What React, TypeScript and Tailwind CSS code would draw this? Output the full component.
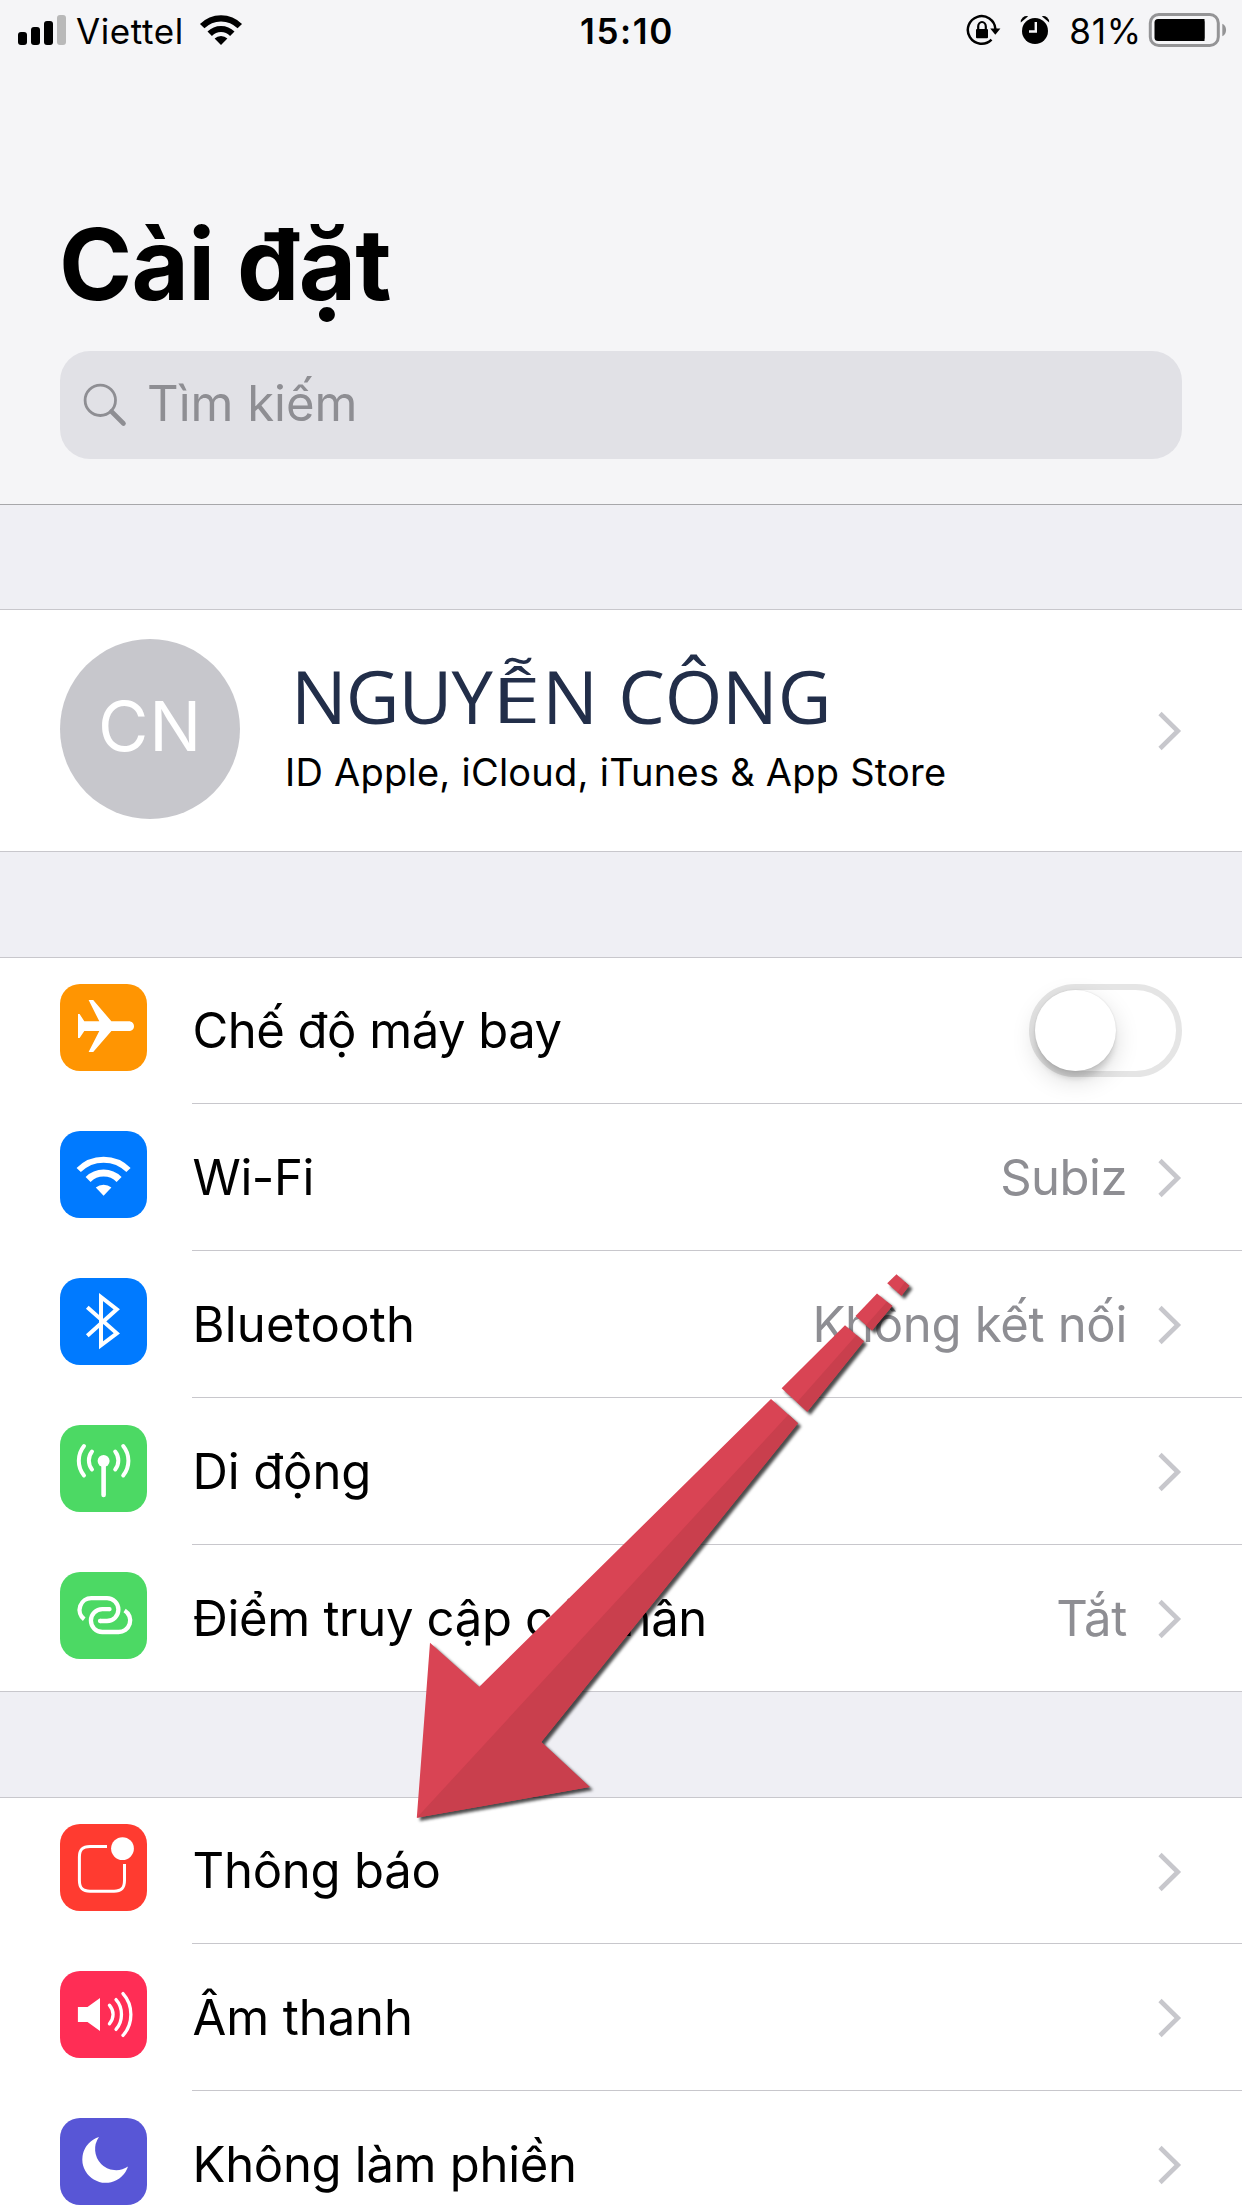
import React from "react";
import type { ReactNode } from "react";

function Chevron() {
  return (
    <svg className="mt-0.5 h-10 w-6 shrink-0" viewBox="0 0 24 40" fill="none">
      <path d="M2 2.5 19.8 20 2 37.5" stroke="#c7c7cc" strokeWidth="4.6" />
    </svg>
  );
}

function StatusBar() {
  return (
    <div className="grid h-[60px] grid-cols-3 items-center text-[35px] leading-[40px]">
      <div className="flex items-center pl-[18px]">
        <svg className="h-[30px] w-12 shrink-0" viewBox="0 0 48 30">
          <rect x="0" y="17" width="9" height="13" rx="3" />
          <rect x="13" y="12" width="9" height="18" rx="3" />
          <rect x="26" y="6" width="9" height="24" rx="3" />
          <rect x="39" y="0" width="9" height="30" rx="3" fill="#b9b9b9" />
        </svg>
        <span className="ml-[10px] pt-[2px] tracking-[0.6px]">Viettel</span>
        <svg className="ml-[15.5px] h-[30px] w-[44px] shrink-0" viewBox="0 0 44 30" fill="none">
          <path d="M3.2 11.2A26.3 26.3 0 0 1 40.8 11.2" stroke="#000" strokeWidth="6.2" />
          <path d="M10.7 18.7A15.9 15.9 0 0 1 33.3 18.7" stroke="#000" strokeWidth="6.2" />
          <path d="M22 30 15.6 23.6A9 9 0 0 1 28.4 23.6Z" fill="#000" />
        </svg>
      </div>
      <div className="pt-[2px] pl-3 text-center font-semibold tracking-[1.6px]">15:10</div>
      <div className="flex items-center justify-end pr-[14px]">
        <svg className="h-9 w-9 shrink-0" viewBox="0 0 36 36" fill="none">
          <path d="M30.4 17A13.8 13.8 0 1 0 26.5 27.6" stroke="#000" strokeWidth="2.5" />
          <path d="M25.2 16.4H35.4L30.3 22.8Z" fill="#000" />
          <rect x="11" y="17" width="12" height="9.3" rx="1" fill="#000" />
          <path d="M13.2 18V14.6A3.8 4.6 0 0 1 20.8 14.6V18" stroke="#000" strokeWidth="2.2" />
        </svg>
        <svg className="ml-[19px] h-8 w-8 shrink-0" viewBox="0 0 32 32" fill="none">
          <circle cx="15" cy="17" r="13" fill="#000" />
          <path d="M0.8 8.6A6 6 0 0 1 8.2 2.2Z" fill="#000" />
          <path d="M29.2 8.6A6 6 0 0 0 21.8 2.2Z" fill="#000" />
          <path d="M15.8 8V17.5H9" stroke="#f5f5f7" strokeWidth="2.4" />
        </svg>
        <span className="ml-[17px] pt-[2px] tracking-[0.8px]">81%</span>
        <svg className="ml-[6px] h-9 w-[80px] shrink-0" viewBox="0 0 80 36" fill="none">
          <rect x="2.3" y="2.5" width="68" height="31" rx="8.5" stroke="#949496" strokeWidth="3" />
          <rect x="6.5" y="7" width="50" height="22" rx="3.5" fill="#000" />
          <path d="M56.5 7V29H50V7Z" fill="#000" />
          <path d="M74.3 11.8C79.3 13.5 79.3 22.5 74.3 24.2Z" fill="#949496" />
        </svg>
      </div>
    </div>
  );
}

const glyphs: Record<string, ReactNode> = {
  plane: (
    <path
      fill="#fff"
      d="M18 30H19.6L24.3 37.3H39.3L28.6 16H33.2L51.4 37.3H68.6C72 37.3 74 39.5 74 42.2C74 45 72 47 68.6 47H51.4L33.2 68H28.6L39.3 47H24.3L19.6 54H18Z"
    />
  ),
  wifi: (
    <>
      <path d="M18.7 39A35.2 35.2 0 0 1 68.5 39" stroke="#fff" strokeWidth="6" />
      <path d="M28.1 48.5A21.8 21.8 0 0 1 59.1 48.5" stroke="#fff" strokeWidth="7" />
      <path d="M43.6 64.7 35.8 56.6A12 12 0 0 1 51.4 56.6Z" fill="#fff" />
    </>
  ),
  bluetooth: (
    <path d="M27.3 29.3 56.8 55.3 41 67.3V19L56.8 31.3 27.3 57.7" stroke="#fff" strokeWidth="4" strokeMiterlimit="10" />
  ),
  antenna: (
    <g stroke="#fff" strokeLinecap="round" strokeWidth="4">
      <circle cx="43.6" cy="36" r="6" fill="#fff" stroke="none" />
      <path d="M43.6 36V70" strokeWidth="4.6" />
      <path d="M32 26.5A14.5 14.5 0 0 0 32 44.5" />
      <path d="M55.2 26.5A14.5 14.5 0 0 1 55.2 44.5" />
      <path d="M24 21A23.5 23.5 0 0 0 24 50.5" />
      <path d="M63.2 21A23.5 23.5 0 0 1 63.2 50.5" />
    </g>
  ),
  hotspot: (
    <g stroke="#fff" strokeWidth="4.3">
      <path d="M24.2 47.2A11.7 11.7 0 0 1 31.5 26.2H47A11.4 11.4 0 0 1 47 49H40" />
      <path d="M49.5 37.2H42.3A11.4 11.4 0 0 0 42.3 60H58A11.6 11.6 0 0 0 64.6 38.5" />
      <path d="M40 49H40.2M49.3 37.2H49.5" strokeLinecap="round" />
    </g>
  ),
  notifications: (
    <>
      <path d="M47 22.5H30C22.5 22.5 19.4 25.6 19.4 33V56.5C19.4 64 22.5 67.2 30 67.2H54C61.5 67.2 64.5 64 64.5 56.5V40" stroke="#fff" strokeWidth="3" />
      <circle cx="62.5" cy="24.6" r="11.4" fill="#fff" />
    </>
  ),
  sound: (
    <g stroke="#fff" strokeWidth="3.3" strokeLinecap="round">
      <path d="M17.9 36H27.5L40 27V60L27.5 51H17.9Z" fill="#fff" stroke="none" />
      <path d="M49.4 34.2C54.3 39.8 54.3 47.2 49.4 52.8" />
      <path d="M56 28.6C63.3 36.6 63.3 50.4 56 58.4" />
      <path d="M63 22.6C73.5 34.2 73.5 52.8 63 64.4" />
    </g>
  ),
  moon: <path fill="#fff" d="M39 19A23.4 23.4 0 1 0 68 48.5A21 21 0 0 1 39 19Z" />,
};

function AppIcon({ glyph, color }: { glyph: string; color: string }) {
  return (
    <div className={"h-[87px] w-[87px] shrink-0 rounded-[20px] " + color}>
      <svg className="h-full w-full" viewBox="0 0 87 87" fill="none">
        {glyphs[glyph]}
      </svg>
    </div>
  );
}

function Toggle() {
  return (
    <div className="flex h-[93px] w-[153px] rounded-full border-[6px] border-[#e5e5e5]">
      <div className="h-[81px] w-[81px] rounded-full bg-white shadow-[0_9px_24px_rgba(0,0,0,0.15),0_9px_6px_-2px_rgba(0,0,0,0.14),0_0_2px_rgba(0,0,0,0.12)]" />
    </div>
  );
}

type RowData = {
  glyph: string;
  color: string;
  label: string;
  track: string;
  value?: string;
  valueTrack?: string;
  toggle?: boolean;
};

const network: RowData[] = [
  { glyph: "plane", color: "bg-[#ff9502]", label: "Chế độ máy bay", track: "tracking-[-0.5px]", toggle: true },
  { glyph: "wifi", color: "bg-[#007aff]", label: "Wi-Fi", track: "tracking-[-0.4px]", value: "Subiz", valueTrack: "tracking-[-0.5px]" },
  { glyph: "bluetooth", color: "bg-[#007aff]", label: "Bluetooth", track: "tracking-[0.21px]", value: "Không kết nối", valueTrack: "tracking-[-0.3px]" },
  { glyph: "antenna", color: "bg-[#4cd964]", label: "Di động", track: "tracking-[-0.1px]" },
  { glyph: "hotspot", color: "bg-[#4cd964]", label: "Điểm truy cập cá nhân", track: "tracking-[-0.32px]", value: "Tắt", valueTrack: "tracking-[-0.3px]" },
];

const alerts: RowData[] = [
  { glyph: "notifications", color: "bg-[#ff3b30]", label: "Thông báo", track: "tracking-[-0.22px]" },
  { glyph: "sound", color: "bg-[#ff2d55]", label: "Âm thanh", track: "tracking-[-0.07px]" },
  { glyph: "moon", color: "bg-[#5856d6]", label: "Không làm phiền", track: "tracking-[-0.29px]" },
];

function Row({ row }: { row: RowData }) {
  return (
    <li className="group flex h-[147px] pt-[27px] pl-[60px] first:h-[146px] first:pt-[26px] last:h-[146px]">
      <AppIcon glyph={row.glyph} color={row.color} />
      <div className="-mt-[27px] ml-[45px] flex flex-1 items-center border-b border-[#c8c7cc] pr-[60px] group-first:-mt-[26px] group-last:border-b-0">
        <span className={"flex-1 pt-px pl-[0.5px] whitespace-nowrap " + row.track}>{row.label}</span>
        {row.toggle ? (
          <Toggle />
        ) : (
          <>
            <span className={"mr-[31px] pt-px whitespace-nowrap text-[#8e8e93] " + (row.valueTrack ?? "")}>{row.value}</span>
            <Chevron />
          </>
        )}
      </div>
    </li>
  );
}

function Group({ rows }: { rows: RowData[] }) {
  return (
    <ul className="shrink-0 border-t border-[#c8c7cc] bg-white text-[49px] leading-[60px]">
      {rows.map((row) => (
        <Row key={row.label} row={row} />
      ))}
    </ul>
  );
}

function PointerArrow() {
  return (
    <svg
      className="pointer-events-none absolute top-[1260px] left-[400px] h-[580px] w-[530px] drop-shadow-[3px_3px_1.5px_rgba(0,0,0,0.7)]"
      viewBox="400 1260 530 580"
    >
      <g fill="#d94454">
        <path d="M896.5 1274.3 909.3 1285.7 901.5 1295.7 887.2 1283.3Z" />
        <path d="M877 1293.5 892.3 1306 872 1330.5 855.5 1316Z" />
        <path d="M845 1325.3 863.9 1341.3 807.3 1411.8 781.6 1388.2Z" />
        <path d="M771 1399 798 1423.3 541.3 1742 589.7 1787 416.8 1817.8 430 1642.7 479.3 1686.7Z" />
      </g>
      <g fill="#c93f4d">
        <path d="M905 1282 909.3 1285.7 901.5 1295.7 897.5 1292.2Z" />
        <path d="M887 1301.8 892.3 1306 872 1330.5 866 1325.2Z" />
        <path d="M856.5 1335 863.9 1341.3 807.3 1411.8 797 1402.3Z" />
        <path d="M788.4 1414.5 798 1423.3 541.3 1742 589.7 1787 416.8 1817.8Z" />
      </g>
    </svg>
  );
}

export default function App() {
  return (
    <div className="relative flex h-[2208px] w-[1242px] flex-col overflow-hidden bg-[#efeff4] font-[Inter,sans-serif] text-black">
      <header className="h-[505px] shrink-0 border-b border-[#a7a7aa] bg-[#f5f5f7]">
        <StatusBar />
        <h1 className="mt-36 pl-[59px] text-[99px] leading-[120px] font-bold tracking-[-0.75px]">Cài đặt</h1>
        <div className="mx-[60px] mt-[27px] flex h-[108px] items-center rounded-[30px] bg-[#e1e1e6] pl-[23px] text-[49px] text-[#8e8e93]">
          <svg className="-mt-px h-11 w-11 shrink-0" viewBox="0 0 44 44" fill="none" stroke="#8e8e93">
            <circle cx="17.3" cy="17.3" r="15.2" strokeWidth="2.8" />
            <path d="M28.5 28.5 40.5 40.5" strokeWidth="4.6" strokeLinecap="round" />
          </svg>
          <span className="ml-[20px] pb-[2px] leading-[60px]">Tìm kiếm</span>
        </div>
      </header>

      <section className="mt-[104px] flex h-[243px] shrink-0 items-center border-y border-[#c8c7cc] bg-white pr-[60px] pb-[2px] pl-[60px]">
        <div className="-mt-0.5 flex h-[180px] w-[180px] shrink-0 items-center justify-center rounded-full bg-[#c7c7cc] pb-[6px] text-[69px] leading-[80px] tracking-[0.7px] text-white">
          CN
        </div>
        <div className="flex flex-1 flex-col pb-[10px] pl-[45px]">
          <div className="pl-[6px] font-['Open_Sans',sans-serif] text-[74px] leading-[80px] whitespace-nowrap text-[#222e49]">
            <span className="tracking-[-0.95px]">NGUY</span>
            <span className="inline-block origin-[0_58px] scale-x-[1.18] scale-y-[0.85]">Ễ</span>
            <span className="ml-[9px]">N </span>
            <span className="ml-[1px] tracking-[-0.1px]">CÔNG</span>
          </div>
          <div className="mt-[14px] text-[38px] leading-[44px] tracking-[0.24px] whitespace-nowrap">
            ID Apple, iCloud, iTunes &amp; App Store
          </div>
        </div>
        <Chevron />
      </section>

      <div className="h-[105px] shrink-0" />
      <Group rows={network} />
      <div className="h-[106px] shrink-0 border-t border-[#c8c7cc]" />
      <Group rows={alerts} />

      <PointerArrow />
    </div>
  );
}
